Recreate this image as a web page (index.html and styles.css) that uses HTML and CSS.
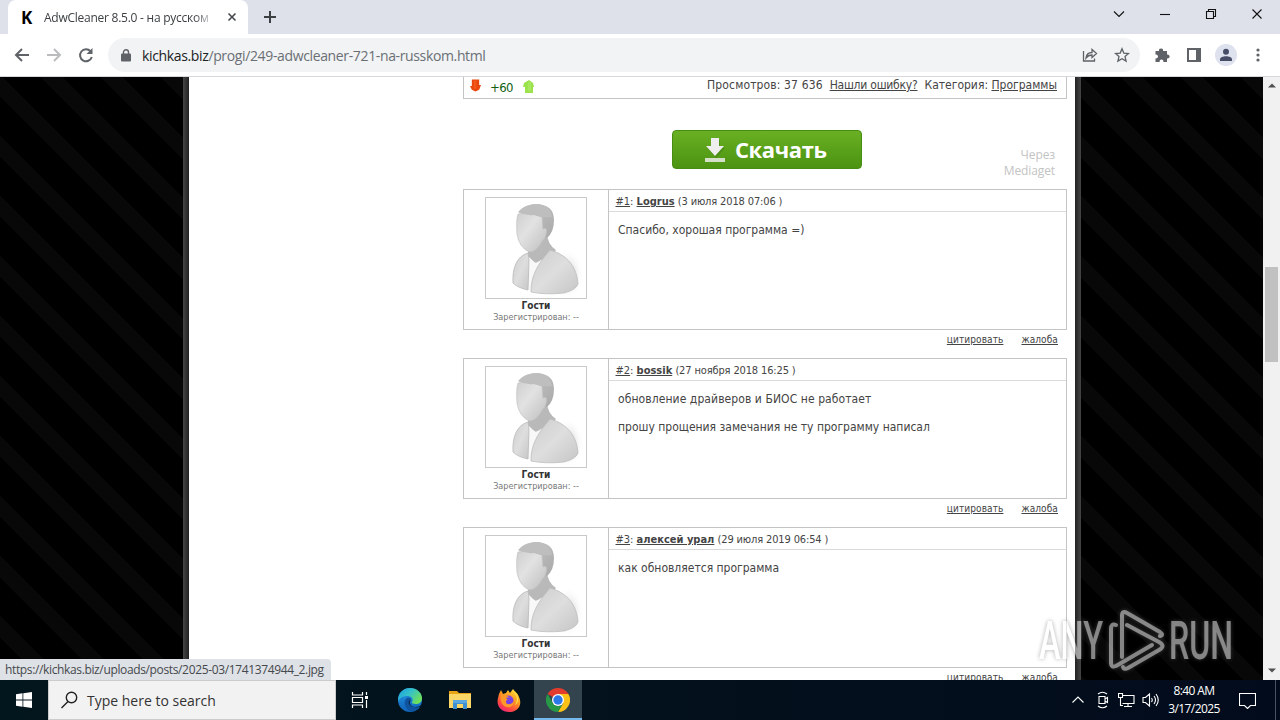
FILE: index.html
```
<!DOCTYPE html>
<html lang="ru">
<head>
  <meta charset="UTF-8">
  <title>AdwCleaner 8.5.0 - на русском</title>
  <link rel="stylesheet" href="styles.css">
</head>
<body>
  <svg width="0" height="0" class="defs">
    <defs>
      <linearGradient id="face" x1="0" y1="0" x2="1" y2="1"><stop offset="0" stop-color="#cfcfcf"/><stop offset=".4" stop-color="#e2e2e2"/><stop offset="1" stop-color="#bebebe"/></linearGradient>
      <linearGradient id="coat" x1="0" y1="0" x2="1" y2="1"><stop offset="0" stop-color="#cdcdcd"/><stop offset=".5" stop-color="#dedede"/><stop offset="1" stop-color="#c6c6c6"/></linearGradient>
      <linearGradient id="hair" x1="0" y1="0" x2="1" y2="1"><stop offset="0" stop-color="#c8c8c8"/><stop offset="1" stop-color="#a9a9a9"/></linearGradient>
      <radialGradient id="shade"><stop offset="0" stop-color="#bbb"/><stop offset="1" stop-color="#fff" stop-opacity="0"/></radialGradient>
      <linearGradient id="edge1" x1="0" y1="0" x2="1" y2=".6"><stop offset="0" stop-color="#1b9de2"/><stop offset=".5" stop-color="#35c1c8"/><stop offset="1" stop-color="#6ee05a"/></linearGradient>
      <linearGradient id="edge2" x1="0" y1="0" x2="0" y2="1"><stop offset="0" stop-color="#2699e6"/><stop offset="1" stop-color="#0f62b8"/></linearGradient>
      <linearGradient id="fox" x1=".8" y1="0" x2=".2" y2="1"><stop offset="0" stop-color="#ffe03a"/><stop offset=".4" stop-color="#ff9a1f"/><stop offset=".75" stop-color="#ff4545"/><stop offset="1" stop-color="#e5217f"/></linearGradient>
      <symbol id="guest" viewBox="0 0 100 100">
        <ellipse cx="81" cy="76" rx="17" ry="25" fill="url(#shade)"/>
        <path d="M42 50L61 34Q61 46 70 52Q60 64 49 65L42 58Z" fill="#b9b9b9"/>
        <path d="M42 60L50 65 57 61 50 94 42 92Z" fill="#f8f8f8"/>
        <path d="M27 85C26 70 31 58 42 55L43 62 42 92Q32 90 27 85Z" fill="url(#coat)" stroke="#b9b9b9" stroke-width=".8"/>
        <path d="M45 94C45 78 51 67 64 52C82 57 91 70 92 86Q90 92 78 95Q60 97 45 94Z" fill="url(#coat)" stroke="#bcbcbc" stroke-width=".8"/>
        <path d="M33 15Q35 7 51 6Q68 7 68 22Q68 34 61 40L55 39 55 19Z" fill="url(#hair)"/>
        <path d="M32 16Q45 14 56 19L57 31Q62 28 60 37Q59 41 57 42Q50 55 43 54Q33 49 31 36Q30 22 32 16Z" fill="url(#face)" stroke="#c0c0c0" stroke-width=".7"/>
        <path d="M32 14Q40 6 51 6Q64 7 66 19Q55 20 48 17Q40 18 32 14Z" fill="#bebebe"/>
      </symbol>
    </defs>
  </svg>
  <div class="window">
    <div class="titlebar">
      <div class="tab">
        <b class="favicon">K</b>
        <span class="tab-title">AdwCleaner 8.5.0 - на русском</span>
        <svg class="tab-close" width="10" height="10" viewBox="0 0 10 10"><path d="M1.500 1.500l7 7M8.500 1.500l-7 7"/></svg>
      </div>
      <svg class="new-tab" width="12" height="12" viewBox="0 0 12 12"><path d="M6 0v12M0 6h12"/></svg>
      <div class="window-buttons">
        <svg width="12" height="12" viewBox="0 0 12 12"><path d="M1 3.500l5 5 5-5"/></svg>
        <svg width="12" height="12" viewBox="0 0 12 12"><path d="M1 6.500h10"/></svg>
        <svg width="12" height="12" viewBox="0 0 12 12"><path d="M1.500 3.500h7v7h-7zM3.500 3.500v-2h7v7h-2"/></svg>
        <svg width="12" height="12" viewBox="0 0 12 12"><path d="M1.500 1.500l9 9M10.500 1.500l-9 9"/></svg>
      </div>
    </div>

    <div class="toolbar">
      <svg class="nav" viewBox="0 0 16 16"><path d="M15 8H2M8 2L2 8l6 6"/></svg>
      <svg class="nav off" viewBox="0 0 16 16"><path d="M1 8h13M8 2l6 6-6 6"/></svg>
      <svg class="nav" viewBox="0 0 16 16"><path d="M12.600 4.300A6 6 0 1 0 13.800 10"/><path d="M14.500 1v6h-6z" class="solid"/></svg>
      <div class="address">
        <svg width="10" height="13" viewBox="0 0 10 13"><rect y="4.500" width="10" height="8" rx="1" fill="#5f6368"/><path d="M2.500 5V3.300a2.500 2.500 0 0 1 5 0V5" fill="none" stroke="#5f6368" stroke-width="1.400"/></svg>
        <span class="url"><span class="host">kichkas.biz</span>/progi/249-adwcleaner-721-na-russkom.html</span>
        <svg class="share" width="16" height="16" viewBox="0 0 16 16"><path d="M1.500 4v10h11v-2.500M4 11c.5-4 3-5.500 6-5.500V2.500L14.500 6.500 10 10.500V8C7 8 5.500 9 4 11z"/></svg>
        <svg class="star" width="16" height="16" viewBox="0 0 16 16"><path d="M8 1.800l1.800 4.300 4.700.4-3.500 3 1.100 4.600L8 11.700l-4.100 2.400L5 9.500l-3.500-3 4.700-.4z"/></svg>
      </div>
      <div class="tools">
        <svg width="16" height="16" viewBox="0 0 16 16"><path d="M1.500 4h3.600a2 2 0 1 1 3.900 0h4v3.600a2 2 0 1 1 0 3.800V15H9.300a1.900 1.900 0 1 0-3.600 0H1.500v-3.700a1.900 1.900 0 1 0 0-3.600z" fill="#5f6368"/></svg>
        <svg width="16" height="16" viewBox="0 0 16 16"><path d="M1 1h14v14H1zM3 3v10h7V3z" fill="#5f6368" fill-rule="evenodd"/></svg>
        <svg width="22" height="22" viewBox="0 0 22 22"><circle cx="11" cy="11" r="11" fill="#dee1ee"/><circle cx="11" cy="7.700" r="3" fill="#474d66"/><path d="M5 17v-1.500c0-2 3-3.200 6-3.200s6 1.200 6 3.200V17z" fill="#474d66"/></svg>
        <svg width="4" height="14" viewBox="0 0 4 14"><circle cx="2" cy="2" r="1.600"/><circle cx="2" cy="7" r="1.600"/><circle cx="2" cy="12" r="1.600"/></svg>
      </div>
    </div>

    <div class="viewport">
      <div class="backdrop">
        <div class="page">
          <div class="main">
            <div class="info">
              <svg width="11" height="14" viewBox="0 0 12 14"><path d="M2 0h8v6h2l-2 5-4 2-4-2-2-4h2z" fill="#e8480c"/><path d="M4 1h3v9H4z" fill="#f4571a"/></svg>
              <span class="rate">+60</span>
              <svg width="12" height="14" viewBox="0 0 12 14"><path d="M6 1l4 3 1 4h-1v6H2V8H0l1-4z" fill="#9be24d"/><path d="M5 3h3v9H5z" fill="#a8e85e"/></svg>
              <div class="meta"><span class="views">Просмотров: 37 636</span><u>Нашли ошибку?</u><span>Категория: <u>Программы</u></span></div>
            </div>
            <div class="download">
              <div class="button">
                <svg width="20" height="25" viewBox="0 0 20 25"><path d="M6 1h8v8h5l-9 10-9-10h5z" fill="#3c7810" opacity=".45" transform="translate(1 1)"/><path d="M6 0h8v8h5l-9 10L1 8h5z" fill="#eee"/><path d="M0 20h20v4H0z" fill="#d4dfca"/></svg>
                <span>Скачать</span>
              </div>
              <div class="mediaget">Через<br>Mediaget</div>
            </div>

            <div class="comment">
              <div class="author"><svg class="avatar"><use href="#guest"/></svg><b>Гости</b><small>Зарегистрирован: --</small></div>
              <div class="body">
                <div class="head"><u>#1</u>: <b>Logrus</b> <span>(3 июля 2018 07:06 )</span></div>
                <p>Спасибо, хорошая программа =)</p>
              </div>
            </div>
            <div class="actions"><u>цитировать</u><u>жалоба</u></div>

            <div class="comment">
              <div class="author"><svg class="avatar"><use href="#guest"/></svg><b>Гости</b><small>Зарегистрирован: --</small></div>
              <div class="body">
                <div class="head"><u>#2</u>: <b>bossik</b> <span>(27 ноября 2018 16:25 )</span></div>
                <p class="wide">обновление драйверов и БИОС не работает</p>
                <p>прошу прощения замечания не ту программу написал</p>
              </div>
            </div>
            <div class="actions"><u>цитировать</u><u>жалоба</u></div>

            <div class="comment">
              <div class="author"><svg class="avatar"><use href="#guest"/></svg><b>Гости</b><small>Зарегистрирован: --</small></div>
              <div class="body">
                <div class="head"><u>#3</u>: <b>алексей урал</b> <span>(29 июля 2019 06:54 )</span></div>
                <p>как обновляется программа</p>
              </div>
            </div>
            <div class="actions"><u>цитировать</u><u>жалоба</u></div>
          </div>
        </div>
      </div>
      <div class="scrollbar">
        <svg width="8" height="5" viewBox="0 0 8 5"><path d="M0 4.500L4 .500l4 4z"/></svg>
        <div class="thumb"></div>
        <svg width="8" height="5" viewBox="0 0 8 5"><path d="M0 .500l4 4 4-4z"/></svg>
      </div>
      <div class="status">https://kichkas.biz/uploads/posts/2025-03/1741374944_2.jpg</div>
      <svg class="watermark" width="200" height="75" viewBox="0 0 200 75">
        <text x="3" y="58" textLength="64" lengthAdjust="spacingAndGlyphs">ANY</text>
        <text x="133" y="58" textLength="64" lengthAdjust="spacingAndGlyphs">RUN</text>
        <g fill="none" stroke="#fff" stroke-width="4" stroke-linejoin="round" stroke-linecap="round">
          <path d="M80 24q-5-2-5 4v34q0 5 5 3l36-21"/>
          <path d="M86 56V15q0-6 5-3l33 19q4 3 0 4M91 24l32 17q7 4 0 8L92 67q-4 2-5-1"/>
        </g>
      </svg>
    </div>

    <div class="taskbar">
      <div class="start"><svg width="16" height="16" viewBox="0 0 16 16"><path d="M0 2.200L6.500 1.300V7.600H0zM7.300 1.200L16 0v7.600H7.300zM0 8.400h6.500v6.300L0 13.800zM7.300 8.400H16V16l-8.700-1.200z" fill="#fff"/></svg></div>
      <div class="search">
        <svg width="18" height="18" viewBox="0 0 18 18"><circle cx="10.500" cy="6.500" r="5.200"/><path d="M7 10.500L.5 17"/></svg>
        <span>Type here to search</span>
      </div>
      <div class="app">
        <svg width="18" height="18" viewBox="0 0 18 18" class="line"><path d="M1.500 1v3h10V1M1.500 6.500h10v5h-10zM1.500 17v-3h10v3M15.500 1v3M15.500 9v8"/><path d="M14 5h3v3h-3z" class="fill"/></svg>
      </div>
      <div class="app edge">
        <svg width="24" height="24" viewBox="0 0 24 24"><circle cx="12" cy="12" r="12" fill="url(#edge2)"/><path d="M.2 10C1.500 3 7 0 12 0c7 0 12 5 12 10 0 4-3 6-6 6-3 0-4.500-1-4-2 2-3-.5-6-4.500-6C5 8 1 10 .2 14z" fill="url(#edge1)"/><path d="M9 10c-4 3-3 10 3 13 4 1 8-1 10-4-4 2-10 0-10-5 0-1 .8-2 1-2 0-2-2-3-4-2z" fill="#10539f"/><path d="M13 12c-3 2-1 7 4 7 3 0 5-1 6-2l1 1c-5 3-15 1-13-5z" fill="#071a28"/></svg>
      </div>
      <div class="app">
        <svg width="22" height="20" viewBox="0 0 22 20"><path d="M0 1h8l2 2h12v3H0z" fill="#e8a317"/><path d="M0 4h22v14H0z" fill="#fbd768"/><path d="M4 10h14v9h-4v-5H8v5H4z" fill="#3d8fd0"/><path d="M4 10h14v3H4z" fill="#5ba7df"/></svg>
      </div>
      <div class="app">
        <svg width="24" height="24" viewBox="0 0 24 24"><path d="M2 6l2-4 2 4 3-1 2-3 2 3 3-4c2 3 5 4 6 8 4 9-2 15-10 15S-1 18 1 10z" fill="url(#fox)"/><circle cx="11.500" cy="12.500" r="5" fill="#8146db"/><path d="M4 7c4-1 6 1 9 3-1 2-4 1-4 4s5 3 8-1c0 5-4 7-7 6-5-1-7-6-6-12z" fill="#ff982b"/><path d="M9 10c3-1 5 0 7 2 0 3-2 4-4 4-3 0-4-3-1-4z" fill="#7542e5"/><path d="M15 2c6 6 6 10 3 15 4-2 5-9-3-15z" fill="#ffe552"/></svg>
      </div>
      <div class="app active">
        <svg width="24" height="24" viewBox="0 0 24 24"><path d="M12 12L1.600 6A12 12 0 0 1 22.400 6z" fill="#e33b2e"/><path d="M12 12V6h10.400A12 12 0 0 1 12 24l5.200-9z" fill="#fbc116"/><path d="M1.600 6L6.800 15A6 6 0 0 0 17.200 15L12 24A12 12 0 0 1 1.600 6z" fill="#279847"/><circle cx="12" cy="12" r="6" fill="#fff"/><circle cx="12" cy="12" r="4.700" fill="#2b79e8"/></svg>
      </div>
      <div class="tray">
        <svg width="12" height="12" viewBox="0 0 12 12"><path d="M.500 8.500L6 3l5.500 5.500"/></svg>
        <svg width="14" height="18" viewBox="0 0 14 18"><path d="M3 5.500h6v7H3zM9 8l2.500-1.500v5L9 10M2 3q4.500-3.500 9 0M2 15q4.500 3.500 9 0"/></svg>
        <svg width="17" height="16" viewBox="0 0 17 16"><path d="M5 3.500h11v8H4.500M10 11.500v3M6 14.500h8M.500 1.500h4v4h-4zM2.500 5.500v8H5"/></svg>
        <svg width="17" height="16" viewBox="0 0 17 16"><path d="M1 5.500h2.500l4-3.500v12l-4-3.500H1zM9.500 6q1.500 2 0 4M12 4q3 4 0 8M14 2q4.500 6 0 12"/></svg>
        <div class="clock">8:40 AM<br>3/17/2025</div>
        <svg width="17" height="17" viewBox="0 0 17 17"><path d="M.500 1.500h16v12h-5l-3 3-3-3h-5z"/></svg>
        <i class="peek"></i>
      </div>
    </div>
  </div>
</body>
</html>
```
FILE: styles.css
```
* { box-sizing: border-box; }
body { margin: 0; overflow: hidden; font-family: "Open Sans", "Noto Sans", sans-serif; }
svg { display: block; flex: none; }
.defs { position: absolute; }
.window { display: flex; flex-direction: column; width: 1280px; height: 720px; }

/* browser chrome */
.titlebar { display: flex; align-items: center; height: 34px; background: #dee1e9; padding-left: 8px; }
.tab { display: flex; align-items: center; width: 240px; height: 34px; background: #fff; border-radius: 8px 8px 0 0; padding-left: 13px; }
.favicon { width: 23px; font: bold 17px "Open Sans", sans-serif; color: #000; }
.tab-title { width: 172px; font-size: 12px; letter-spacing: -.25px; white-space: nowrap; overflow: hidden; color: #3c4043; -webkit-mask-image: linear-gradient(90deg, #000 150px, transparent 172px); }
.tab-close { margin-left: 11px; fill: none; stroke: #45494d; stroke-width: 1.6; }
.new-tab { margin-left: 16px; stroke: #3c4043; stroke-width: 2; }
.window-buttons { display: flex; gap: 34px; margin-left: auto; padding-right: 17px; padding-bottom: 6px; fill: none; stroke: #111; stroke-width: 1.1; }
.toolbar { display: flex; align-items: center; height: 43px; background: #fff; border-bottom: 1px solid #d5d7da; padding-left: 14px; }
.nav { width: 16px; height: 16px; margin-right: 16px; fill: none; stroke: #5f6368; stroke-width: 2; }
.nav.off { stroke: #babcbe; }
.nav .solid { fill: #5f6368; stroke: none; }
.nav:nth-child(3) { margin-right: 14px; }
.address { display: flex; align-items: center; width: 1032px; height: 34px; border-radius: 17px; background: #f1f3f4; padding: 0 10px 0 13px; }
.url { margin-left: 11px; margin-right: auto; font-size: 14px; letter-spacing: -.36px; color: #6b6f74; }
.host { color: #202124; }
.share, .star { fill: none; stroke: #5f6368; stroke-width: 1.3; margin-left: 16px; }
.tools { display: flex; align-items: center; margin-left: 14px; fill: #5f6368; }
.tools svg { margin-right: 16px; }
.tools svg:nth-child(2) { margin-right: 13px; }
.tools svg:nth-child(3) { margin-right: 19px; }

/* page */
.viewport { position: relative; display: flex; height: 603px; overflow: hidden; }
.backdrop { width: 1263px; background: repeating-linear-gradient(45deg, #080808 0 3.500px, #000 3.500px 30.400px, #080808 30.400px 42.430px); }
.page { width: 898px; height: 603px; margin-left: 183px; padding-left: 280px; background: linear-gradient(90deg, #454545, #222 6px, #fff 6px 892px, #222 892px, #454545); }
.main { width: 604px; font-family: "DejaVu Sans Condensed", "DejaVu Sans", sans-serif; color: #444; }
.info { display: flex; height: 22px; padding: 2px 9px 0 6px; border: 1px solid #c4c4c4; border-top: 0; font-size: 12px; }
.rate { width: 33px; margin-left: 9px; padding-top: 2px; color: #106010; font-size: 13px; letter-spacing: -.6px; line-height: 14px; }
.meta { display: flex; gap: 7px; margin-left: auto; line-height: 13px; white-space: nowrap; }
.meta > u { letter-spacing: -.22px; }
.views { letter-spacing: .13px; }
.download { display: flex; height: 90px; padding: 31px 11px 0 209px; }
.button { display: flex; align-items: center; width: 190px; height: 39px; padding-left: 32px; border: 1px solid #478c13; border-radius: 4px; background: linear-gradient(#6ab023, #4b9312); color: #fff; font: bold 22px "Open Sans", sans-serif; }
.button svg { margin-top: 2px; }
.button span { margin-left: 10px; padding-bottom: 2px; letter-spacing: -.4px; }
.mediaget { margin: 17px 1px 0 auto; text-align: right; font: 12px/16px "Open Sans", sans-serif; letter-spacing: -.1px; color: #c3c3c3; }
.comment { display: flex; height: 141px; border: 1px solid #c4c4c4; }
.author { display: flex; flex-direction: column; align-items: center; width: 145px; padding-top: 7px; border-right: 1px solid #c4c4c4; }
.avatar { width: 102px; height: 102px; border: 1px solid #c9c9c9; }
.author b { font-size: 10px; line-height: 14px; color: #333; }
.author small { font-size: 9px; line-height: 9px; color: #777; }
.body { flex: 1; }
.head { height: 22px; padding-left: 6.500px; border-bottom: 1px solid #dadada; font-size: 11px; line-height: 23px; white-space: pre; }
.head b { text-decoration: underline; }
.head span { letter-spacing: -.14px; }
.body p { margin: 11px 0 0 9px; font-size: 12px; line-height: 15px; white-space: nowrap; }
.body p + p { margin-top: 13px; }
.body .wide { letter-spacing: .08px; }
.actions { display: flex; justify-content: flex-end; gap: 18px; height: 28px; padding: 4px 9px 0 0; font-size: 10px; letter-spacing: .1px; line-height: 12px; }

.scrollbar { display: flex; flex-direction: column; align-items: center; width: 17px; background: #f1f1f1; padding: 6px 0 7px; fill: #505050; }
.thumb { width: 13px; height: 95px; margin: 179px 0 auto; background: #c1c1c1; }
.status { position: absolute; left: 0; bottom: 0; width: 331px; height: 21px; padding-left: 5px; border-radius: 0 4px 0 0; background: #dee1e6; color: #45494d; font-size: 12px; letter-spacing: -.36px; line-height: 21px; white-space: nowrap; }
.watermark { position: absolute; left: 1036px; top: 524px; opacity: .52; filter: drop-shadow(0 0 2px #666); }
.watermark text { font: 500 53px Roboto, sans-serif; fill: #fff; }

/* taskbar */
.taskbar { display: flex; height: 40px; background: linear-gradient(90deg, #02161e, #03101c 60%, #020b1c); }
.start { display: flex; align-items: center; width: 48px; padding-left: 16px; }
.search { display: flex; align-items: center; width: 288px; padding-left: 12px; background: #f2f2f2; border: 1px solid #ccc; fill: none; stroke: #222; stroke-width: 1.4; }
.search span { margin-left: 8px; font-size: 14px; color: #333; white-space: nowrap; }
.app { display: flex; align-items: center; justify-content: center; width: 49px; padding-right: 2px; }
.app.edge { width: 51px; }
.app.active { width: 48px; background: #34444e; border-bottom: 2px solid #76b9ed; padding: 2px 0 0; }
.line { fill: none; stroke: #fff; stroke-width: 1.2; }
.line .fill { fill: #fff; stroke: none; }
.tray { display: flex; align-items: center; margin-left: auto; fill: none; stroke: #fff; stroke-width: 1.1; }
.tray svg { margin-right: 7px; }
.tray svg:first-child { margin-right: 12px; }
.tray svg:nth-child(2) { margin-right: 8px; }
.tray svg:nth-child(3) { margin-right: 7px; }
.tray svg:nth-child(4) { margin-right: 0; }
.clock { width: 70px; color: #fff; font-size: 12px; line-height: 18px; text-align: center; letter-spacing: -.6px; }
.clock + svg { margin-left: 10px; }
.tray .peek { width: 1px; height: 40px; margin-left: 12px; margin-right: 4px; background: #4a5260; }
```
